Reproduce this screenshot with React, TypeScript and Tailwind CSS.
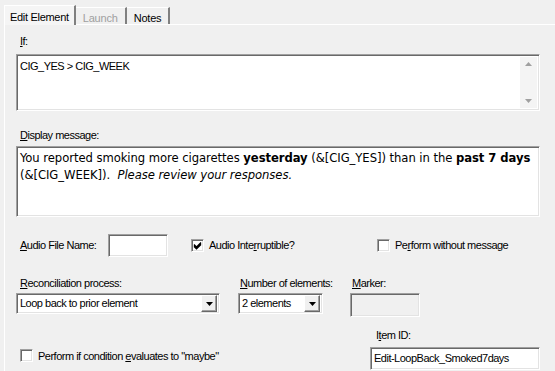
import React from 'react'

const sunken =
  'border border-t-[#a0a0a0] border-l-[#a0a0a0] border-r-white border-b-white shadow-[inset_1px_1px_0_#696969,inset_-1px_-1px_0_#e3e3e3]'

const Label: React.FC<{ k: string; rest: string; className?: string }> = ({ k, rest, className }) => (
  <div className={`text-[11px] leading-[13px] text-black ${className ?? ''}`}>
    <span className="underline underline-offset-1">{k}</span>
    {rest}
  </div>
)

const CheckBox: React.FC<{ checked?: boolean }> = ({ checked }) => (
  <div className={`w-[13px] h-[13px] bg-white ${sunken} flex items-center justify-center shrink-0`}>
    {checked && (
      <svg width="9" height="9" viewBox="0 0 9 9">
        <path d="M1 3.5 L3.5 6 L8 1.5 M1 4.5 L3.5 7 L8 2.5 M1 5.5 L3.5 8 L8 3.5" stroke="#000" strokeWidth="1.2" fill="none" />
      </svg>
    )}
  </div>
)

const DropArrow: React.FC = () => (
  <div className="w-[16px] h-[17px] bg-[#f0f0f0] border border-t-white border-l-white border-r-[#696969] border-b-[#696969] shadow-[inset_-1px_-1px_0_#a0a0a0] flex items-center justify-center">
    <svg width="7" height="4" viewBox="0 0 7 4">
      <path d="M0 0 H7 L3.5 4 Z" fill="#000" />
    </svg>
  </div>
)

const Select: React.FC<{ value: string; width: string }> = ({ value, width }) => (
  <div className={`${width} h-[21px] bg-white ${sunken} flex items-center justify-between pl-[3px] pr-[2px]`}>
    <span className="text-[11px]">{value}</span>
    <DropArrow />
  </div>
)

export default function App() {
  return (
    <div className="w-[555px] h-[371px] overflow-hidden bg-[#f0f0f0] font-['Liberation_Sans',Arial,sans-serif] text-black select-none">
      {/* Tabs */}
      <div className="flex items-end h-[24px] pl-[4px] text-[11px]">
        <div className="relative z-10 h-[20px] -mb-px px-[5px] pt-[3px] bg-[#f5f5f5] border-l border-t border-white border-r-2 border-r-[#808080] tracking-[-0.3px]">
          Edit Element
        </div>
        <div className="h-[17px] px-[7px] pt-[2px] text-[#a0a0a0] border-t border-white border-r-2 border-r-[#808080] tracking-[-0.2px]">
          Launch
        </div>
        <div className="h-[17px] px-[7px] pt-[2px] border-t border-white border-r-2 border-r-[#808080] tracking-[-0.2px]">
          Notes
        </div>
      </div>

      {/* Panel */}
      <div className="ml-[4px] h-[347px] border-l border-t border-white pl-[11px] tracking-[-0.5px]">
        <Label k="I" rest="f:" className="mt-[10px] ml-[4px]" />
        <div className={`mt-[6px] w-[524px] h-[57px] bg-white ${sunken} flex`}>
          <div className="flex-1 pl-[3px] pt-[3px] text-[11px]">CIG_YES &gt; CIG_WEEK</div>
          <div className="w-[17px] my-[2px] mr-[2px] bg-[#f4f4f4] flex flex-col justify-between items-center py-[5px]">
            <svg width="7" height="4" viewBox="0 0 7 4">
              <path d="M3.5 0 L7 4 H0 Z" fill="#a0a0a0" />
            </svg>
            <svg width="7" height="4" viewBox="0 0 7 4">
              <path d="M0 0 H7 L3.5 4 Z" fill="#a0a0a0" />
            </svg>
          </div>
        </div>

        <Label k="D" rest="isplay message:" className="mt-[18px] ml-[4px]" />
        <div className={`mt-[4px] w-[524px] h-[71px] bg-white ${sunken} pl-[3px] pt-[2px] font-['DejaVu_Sans_Condensed','DejaVu_Sans',sans-serif] [font-stretch:condensed] text-[12.9px] leading-[17px] tracking-[-0.05px] whitespace-nowrap`}>
          You reported smoking more cigarettes <b>yesterday</b> (&amp;[CIG_YES]) than in the <b>past 7 days</b>
          <br />
          (&amp;[CIG_WEEK]).&nbsp; <i>Please review your responses.</i>
        </div>

        {/* Audio row */}
        <div className="mt-[17px] flex items-center h-[23px]">
          <Label k="A" rest="udio File Name:" className="ml-[4px] w-[88px]" />
          <div className={`w-[60px] h-[23px] bg-white ${sunken}`} />
          <div className="ml-[23px] w-[186px] flex items-center gap-[5px]">
            <CheckBox checked />
            <span className="text-[11px]">
              Audio Inte<span className="underline underline-offset-1">r</span>ruptible?
            </span>
          </div>
          <div className="flex items-center gap-[5px]">
            <CheckBox />
            <span className="text-[11px]">
              Pe<span className="underline underline-offset-1">r</span>form without message
            </span>
          </div>
        </div>

        {/* Reconciliation labels */}
        <div className="mt-[20px] flex">
          <Label k="R" rest="econciliation process:" className="ml-[4px] w-[220px]" />
          <Label k="N" rest="umber of elements:" className="w-[112px]" />
          <Label k="M" rest="arker:" />
        </div>
        <div className="mt-[3px] flex items-start">
          <Select value="Loop back to prior element" width="w-[204px]" />
          <div className="ml-[18px]">
            <Select value="2 elements" width="w-[85px]" />
          </div>
          <div className={`ml-[27px] w-[70px] h-[24px] bg-[#f0f0f0] ${sunken}`} />
        </div>

        {/* Bottom row */}
        <div className="mt-[12px] flex items-end w-[524px] justify-between">
          <div className="flex items-center gap-[5px] ml-[4px] mb-[6px]">
            <CheckBox />
            <span className="text-[11px]">
              Perform if condition <span className="underline underline-offset-1">e</span>valuates to "maybe"
            </span>
          </div>
          <div className="w-[170px]">
            <div className="text-[11px] leading-[13px] ml-[6px]">
              I<span className="underline underline-offset-1">t</span>em ID:
            </div>
            <div className={`mt-[5px] w-[170px] h-[23px] bg-white ${sunken} pl-[3px] pt-[4px] text-[11px] leading-[13px]`}>
              Edit-LoopBack_Smoked7days
            </div>
          </div>
        </div>
      </div>
    </div>
  )
}
